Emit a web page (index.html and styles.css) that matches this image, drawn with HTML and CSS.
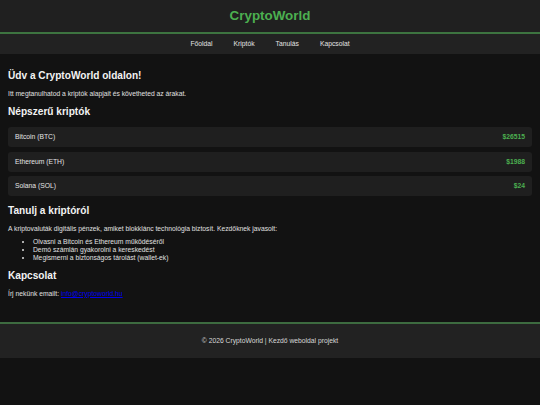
FILE: index.html
```html
<!DOCTYPE html>
<html lang="hu">
<head>
<meta charset="utf-8">
<title>CryptoWorld</title>
<link rel="stylesheet" href="styles.css">
</head>
<body>
<header class="site-header">
  <h1 class="logo">CryptoWorld</h1>
</header>
<nav class="site-nav">
  <a href="#">Főoldal</a>
  <a href="#">Kriptók</a>
  <a href="#">Tanulás</a>
  <a href="#">Kapcsolat</a>
</nav>
<main class="content">
  <h2 class="heading">Üdv a CryptoWorld oldalon!</h2>
  <p class="text">Itt megtanulhatod a kriptók alapjait és követheted az árakat.</p>
  <h2 class="heading">Népszerű kriptók</h2>
  <div class="cards">
    <div class="card"><span>Bitcoin (BTC)</span><span class="price">$26515</span></div>
    <div class="card"><span>Ethereum (ETH)</span><span class="price">$1988</span></div>
    <div class="card"><span>Solana (SOL)</span><span class="price">$24</span></div>
  </div>
  <h2 class="heading">Tanulj a kriptóról</h2>
  <p class="text before-list">A kriptovaluták digitális pénzek, amiket blokklánc technológia biztosít. Kezdőknek javasolt:</p>
  <ul class="list">
    <li>Olvasni a Bitcoin és Ethereum működéséről</li>
    <li>Demó számlán gyakorolni a kereskedést</li>
    <li>Megismerni a biztonságos tárolást (wallet-ek)</li>
  </ul>
  <h2 class="heading">Kapcsolat</h2>
  <p class="text">Írj nekünk emailt: <a class="mail" href="#">info@cryptoworld.hu</a></p>
</main>
<footer class="site-footer">© 2026 CryptoWorld | Kezdő weboldal projekt</footer>
</body>
</html>
```
FILE: styles.css
```css
* { box-sizing: border-box; }
html { background: #121212; }
body {
  margin: 0;
  background: #121212;
  color: #e0e0e0;
  font-family: "Liberation Sans", Arial, sans-serif;
  font-size: 6.75px;
  line-height: 7.76px;
}
.site-header {
  background: #202020;
  height: 33.7px;
  border-bottom: 2px solid #3d7440;
  display: flex;
  align-items: center;
  justify-content: center;
}
.logo {
  margin: 0;
  color: #4caf50;
  font-size: 13.4px;
  line-height: 15.5px;
  font-weight: bold;
}
.site-nav {
  background: #222222;
  height: 20px;
  display: flex;
  align-items: center;
  justify-content: center;
  gap: 21px;
}
.site-nav a {
  color: #e2e2e2;
  text-decoration: none;
  font-size: 6.75px;
}
.content {
  padding: 8px 8px 17.75px;
}
.heading {
  margin: 8.4px 0;
  font-size: 10.125px;
  line-height: 11.63px;
  font-weight: bold;
  color: #f2f2f2;
}
.text {
  margin: 6.75px 0;
  color: #e0e0e0;
}
.text.before-list { margin-bottom: 5.75px; }
.cards {
  display: flex;
  flex-direction: column;
  gap: 4.65px;
  margin: 9px 0 8.4px;
}
.card {
  background: #1f1f1f;
  border-radius: 3px;
  height: 20px;
  padding: 0 7px;
  display: flex;
  align-items: center;
  justify-content: space-between;
  color: #e4e4e4;
}
.price {
  color: #4caf50;
  font-weight: bold;
}
.list {
  margin: 5.75px 0 6.75px;
  padding-left: 25px;
}
.mail { color: #0000ee; }
.site-footer {
  border-top: 2px solid #3d6b40;
  background: #222222;
  height: 36px;
  display: flex;
  align-items: center;
  justify-content: center;
  color: #d8d8d8;
}
```
